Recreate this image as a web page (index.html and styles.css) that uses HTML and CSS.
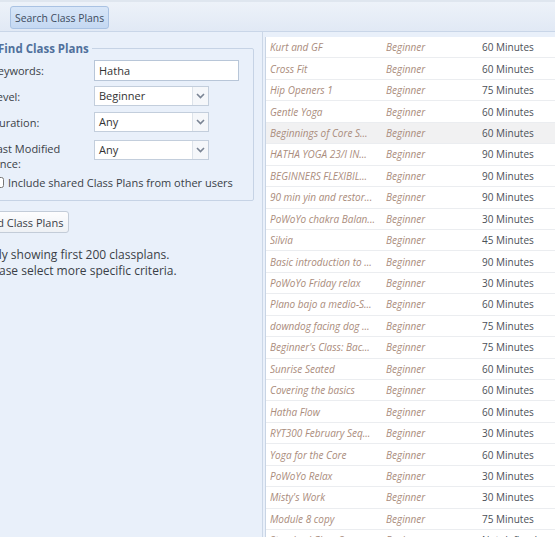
FILE: index.html
```html
<!DOCTYPE html>
<html>
<head>
  <title>Search Class Plans</title>
  <link rel="stylesheet" href="styles.css">
</head>
<body>
  <div class="topbar">
    <button class="tab">Search Class Plans</button>
  </div>
  <div class="main">
    <div class="left">
      <div class="left-inner">
        <fieldset class="search-box">
          <legend>Find Class Plans</legend>
          <div class="form-row first">
            <label for="keywords">Keywords:</label>
            <input type="text" id="keywords" class="text-input" value="Hatha">
          </div>
          <div class="form-row">
            <label>Level:</label>
            <div class="combo"><span class="combo-value">Beginner</span><span class="combo-arrow"><svg width="9" height="6" viewBox="0 0 9 6"><path d="M1 1l3.5 3.5L8 1" fill="none" stroke="#7a8494" stroke-width="1.6"/></svg></span></div>
          </div>
          <div class="form-row">
            <label>Duration:</label>
            <div class="combo"><span class="combo-value">Any</span><span class="combo-arrow"><svg width="9" height="6" viewBox="0 0 9 6"><path d="M1 1l3.5 3.5L8 1" fill="none" stroke="#7a8494" stroke-width="1.6"/></svg></span></div>
          </div>
          <div class="form-row tall">
            <label>Last Modified Since:</label>
            <div class="combo"><span class="combo-value">Any</span><span class="combo-arrow"><svg width="9" height="6" viewBox="0 0 9 6"><path d="M1 1l3.5 3.5L8 1" fill="none" stroke="#7a8494" stroke-width="1.6"/></svg></span></div>
          </div>
          <div class="check-row">
            <input type="checkbox" id="shared" class="check">
            <label for="shared">Include shared Class Plans from other users</label>
          </div>
        </fieldset>
        <button class="find-btn">Find Class Plans</button>
        <p class="notice">Only showing first 200 classplans.<br>Please select more specific criteria.</p>
      </div>
    </div>
    <div class="right">
      <div class="plan-list">
        <div class="plan-row"><span class="plan-name">Kurt and GF</span><span class="plan-level">Beginner</span><span class="plan-time">60 Minutes</span></div>
        <div class="plan-row"><span class="plan-name">Cross Fit</span><span class="plan-level">Beginner</span><span class="plan-time">60 Minutes</span></div>
        <div class="plan-row"><span class="plan-name">Hip Openers 1</span><span class="plan-level">Beginner</span><span class="plan-time">75 Minutes</span></div>
        <div class="plan-row"><span class="plan-name">Gentle Yoga</span><span class="plan-level">Beginner</span><span class="plan-time">60 Minutes</span></div>
        <div class="plan-row hover"><span class="plan-name">Beginnings of Core S...</span><span class="plan-level">Beginner</span><span class="plan-time">60 Minutes</span></div>
        <div class="plan-row"><span class="plan-name">HATHA YOGA 23/I IN...</span><span class="plan-level">Beginner</span><span class="plan-time">90 Minutes</span></div>
        <div class="plan-row"><span class="plan-name">BEGINNERS FLEXIBIL...</span><span class="plan-level">Beginner</span><span class="plan-time">90 Minutes</span></div>
        <div class="plan-row"><span class="plan-name">90 min yin and restor...</span><span class="plan-level">Beginner</span><span class="plan-time">90 Minutes</span></div>
        <div class="plan-row"><span class="plan-name">PoWoYo chakra Balan...</span><span class="plan-level">Beginner</span><span class="plan-time">30 Minutes</span></div>
        <div class="plan-row"><span class="plan-name">Silvia</span><span class="plan-level">Beginner</span><span class="plan-time">45 Minutes</span></div>
        <div class="plan-row"><span class="plan-name">Basic introduction to ...</span><span class="plan-level">Beginner</span><span class="plan-time">90 Minutes</span></div>
        <div class="plan-row"><span class="plan-name">PoWoYo Friday relax</span><span class="plan-level">Beginner</span><span class="plan-time">30 Minutes</span></div>
        <div class="plan-row"><span class="plan-name">Plano bajo a medio-S...</span><span class="plan-level">Beginner</span><span class="plan-time">60 Minutes</span></div>
        <div class="plan-row"><span class="plan-name">downdog facing dog ...</span><span class="plan-level">Beginner</span><span class="plan-time">75 Minutes</span></div>
        <div class="plan-row"><span class="plan-name">Beginner's Class: Bac...</span><span class="plan-level">Beginner</span><span class="plan-time">75 Minutes</span></div>
        <div class="plan-row"><span class="plan-name">Sunrise Seated</span><span class="plan-level">Beginner</span><span class="plan-time">60 Minutes</span></div>
        <div class="plan-row"><span class="plan-name">Covering the basics</span><span class="plan-level">Beginner</span><span class="plan-time">60 Minutes</span></div>
        <div class="plan-row"><span class="plan-name">Hatha Flow</span><span class="plan-level">Beginner</span><span class="plan-time">60 Minutes</span></div>
        <div class="plan-row"><span class="plan-name">RYT300 February Seq...</span><span class="plan-level">Beginner</span><span class="plan-time">30 Minutes</span></div>
        <div class="plan-row"><span class="plan-name">Yoga for the Core</span><span class="plan-level">Beginner</span><span class="plan-time">60 Minutes</span></div>
        <div class="plan-row"><span class="plan-name">PoWoYo Relax</span><span class="plan-level">Beginner</span><span class="plan-time">30 Minutes</span></div>
        <div class="plan-row"><span class="plan-name">Misty's Work</span><span class="plan-level">Beginner</span><span class="plan-time">30 Minutes</span></div>
        <div class="plan-row"><span class="plan-name">Module 8 copy</span><span class="plan-level">Beginner</span><span class="plan-time">75 Minutes</span></div>
        <div class="plan-row"><span class="plan-name">Standard Class Seq...</span><span class="plan-level">Beginner</span><span class="plan-time">Not defined</span></div>
      </div>
    </div>
  </div>
</body>
</html>
```

FILE: styles.css
```css
/* Search class plans screen */
html, body {
  margin: 0;
  height: 100%;
  overflow: hidden;
}

body {
  font-family: "Open Sans", Arial, sans-serif;
  font-size: 11px;
  color: #3a3f47;
  background-color: #e9f0fa;
}

.topbar {
  height: 32px;
  box-sizing: border-box;
  padding: 4px 0 0 10px;
  border-top: 2px solid #dfe6ef;
  background: linear-gradient(#edf2f9, #e1e9f5);
  border-bottom: 1px solid #c9d6e8;
}

.tab {
  height: 23px;
  padding: 0 4px;
  font-family: "Open Sans", Arial, sans-serif;
  font-size: 10.4px;
  color: #3d4b5e;
  background: linear-gradient(#d8e6f8, #c4d8f2);
  border: 1px solid #a9c2e3;
  border-radius: 3px;
}

.main {
  display: flex;
  height: 505px;
}

.left {
  width: 262px;
  overflow: hidden;
  border-right: 1px solid #cbd7e7;
}

.left-inner {
  margin-left: -24px;
}

.search-box {
  margin: 9px 8px 0 -6px;
  padding: 4px 8px 10px 20px;
  border: 1px solid #c6d3e5;
  border-radius: 2px;
}

.search-box legend {
  padding: 0 3px;
  margin-left: 4px;
  font-weight: bold;
  color: #50709c;
  font-size: 11.5px;
}

.form-row {
  display: flex;
  align-items: center;
  margin-bottom: 6px;
}

.form-row.first {
  margin-bottom: 5px;
}

.form-row label {
  width: 103px;
  flex-shrink: 0;
}

.form-row.tall {
  align-items: flex-start;
  margin-top: 8px;
}

.form-row.tall label {
  width: 80px;
  margin-right: 23px;
  line-height: 15px;
  margin-top: 1px;
}

.text-input {
  width: 145px;
  height: 21px;
  box-sizing: border-box;
  padding: 0 4px;
  font-family: "Open Sans", Arial, sans-serif;
  font-size: 11px;
  color: #333;
  border: 1px solid #b8c6d8;
  border-radius: 0;
  outline: none;
}

.combo {
  display: flex;
  width: 115px;
  height: 20px;
  box-sizing: border-box;
  background: #fff;
  border: 1px solid #c3cedc;
}

.combo-value {
  flex: 1;
  padding-left: 4px;
  line-height: 18px;
  color: #333;
}

.combo-arrow {
  width: 15px;
  display: flex;
  align-items: center;
  justify-content: center;
  border-left: 1px solid #dde3ea;
  background: #f5f7fa;
}

.check-row {
  display: flex;
  align-items: center;
  margin-top: -2px;
}

.check {
  width: 11px;
  height: 11px;
  margin: 0 4px 0 2px;
}

.find-btn {
  margin-top: 10px;
  height: 22px;
  padding: 0 5px;
  font-family: "Open Sans", Arial, sans-serif;
  font-size: 11px;
  color: #3a3f47;
  background: linear-gradient(#fdfdfe, #eef1f5);
  border: 1px solid #c3ccd8;
  border-radius: 3px;
}

.notice {
  margin: 14px 0 0 6px;
  font-size: 12px;
  line-height: 16px;
  color: #3a3f47;
}

.right {
  flex: 1;
  margin: 5px 0 0 2px;
  background: #fff;
  border-left: 1px solid #c8d4e4;
}

.plan-row {
  display: flex;
  height: 21.45px;
  box-sizing: border-box;
  align-items: center;
  padding-left: 4px;
  font-size: 10px;
  border-bottom: 1px solid #ebedf0;
  white-space: nowrap;
}

.plan-row.hover {
  background: #f1f1f2;
}

.plan-name {
  width: 116px;
  font-style: italic;
  color: #aa8c7c;
  overflow: hidden;
}

.plan-level {
  width: 96px;
  font-style: italic;
  color: #aa8c7c;
}

.plan-time {
  color: #4c5058;
}
```
